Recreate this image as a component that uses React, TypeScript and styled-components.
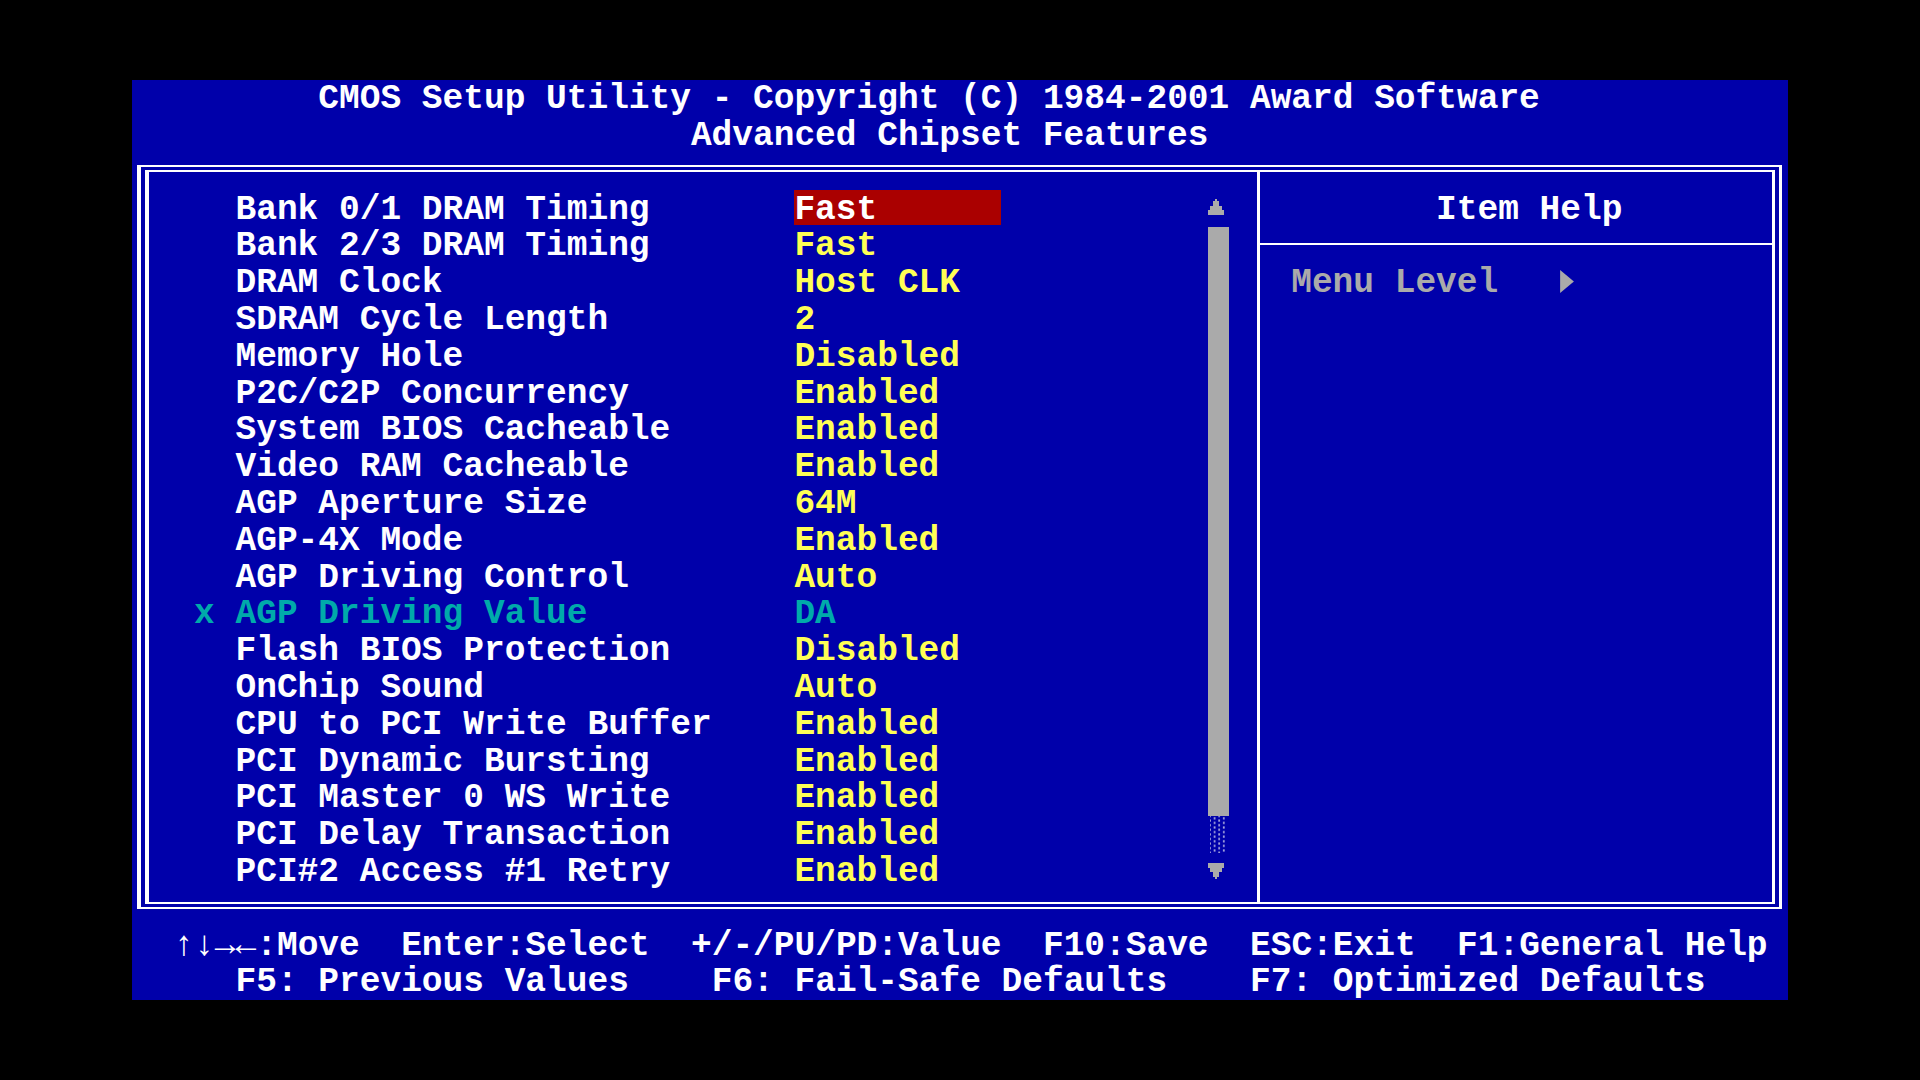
import React from "react";
import styled, { createGlobalStyle, css } from "styled-components";

const CW = 20.7; // character cell width
const RH = 36.8; // character cell height
const TEXT_SHIFT = 2.2; // baseline offset inside a cell
const px = (n: number) => `${+n.toFixed(3)}px`;

const C = {
  blue: "#0000AA",
  white: "#FFFFFF",
  yellow: "#FFFF55",
  cyan: "#00AAAA",
  gray: "#AAAAAA",
  red: "#AA0000",
};

// measured frame geometry (screen-relative)
const FRAME_LEFT_INNER = 17.3;
const DIVIDER_X = 1125;
const DIVIDER_W = 3.5;

const GlobalStyle = createGlobalStyle`
  html, body { margin: 0; padding: 0; background: #000; }
  body { width: 1920px; height: 1080px; overflow: hidden; }
`;

const cellText = css`
  box-sizing: border-box;
  height: ${px(RH)};
  line-height: ${px(RH - TEXT_SHIFT)};
  padding-top: ${px(TEXT_SHIFT)};
`;

const Screen = styled.div`
  width: ${px(80 * CW)};
  height: ${px(25 * RH)};
  margin: 80px auto 0;
  background: ${C.blue};
  display: flex;
  flex-direction: column;
  font-family: "Liberation Mono", "DejaVu Sans Mono", monospace;
  font-weight: 700;
  font-size: 34.5px;
  color: ${C.white};
  white-space: pre;
`;

const Header = styled.header`
  display: flex;
  flex-direction: column;
`;

const TitleLine = styled.div<{ $indent: number }>`
  ${cellText};
  padding-left: ${(p) => px(p.$indent * CW)};
`;

const Frame = styled.main`
  box-sizing: border-box;
  height: ${px(21 * RH - 11.4 - 17.4)};
  margin: 11.4px 6.3px 17.4px 5.3px;
  border-style: double;
  border-color: ${C.white};
  border-width: 7px 10px 7px 12px;
  display: flex;
`;

const ListPanel = styled.section`
  width: ${px(DIVIDER_X - FRAME_LEFT_INNER)};
  flex: none;
  padding-top: ${px(RH / 2)};
  display: flex;
  align-items: flex-start;
`;

const ItemList = styled.div`
  width: ${px(52 * CW - FRAME_LEFT_INNER)};
  display: flex;
  flex-direction: column;
`;

const ItemRow = styled.div<{ $disabled?: boolean }>`
  ${cellText};
  display: flex;
  align-items: flex-start;
  padding-left: ${px(3 * CW - FRAME_LEFT_INNER)};
  color: ${(p) => (p.$disabled ? C.cyan : C.white)};
`;

const Mark = styled.span`
  width: ${px(2 * CW)};
  flex: none;
`;

const Label = styled.span`
  width: ${px(27 * CW)};
  flex: none;
`;

const Value = styled.span<{ $selected?: boolean; $disabled?: boolean }>`
  box-sizing: border-box;
  width: ${px(10 * CW)};
  flex: none;
  margin-top: ${px(-TEXT_SHIFT - 0.6)};
  padding-top: ${px(TEXT_SHIFT + 0.6)};
  height: 35.6px;
  color: ${(p) => (p.$selected ? C.white : p.$disabled ? C.cyan : C.yellow)};
  background: ${(p) => (p.$selected ? C.red : "transparent")};
`;

const Scrollbar = styled.div`
  width: ${px(CW)};
  flex: none;
  display: flex;
  flex-direction: column;
`;

const ScrollArrow = styled.div<{ $top: number }>`
  height: ${px(RH)};
  box-sizing: border-box;
  padding-top: ${(p) => px(p.$top)};
  display: flex;
  align-items: flex-start;
  svg {
    display: block;
  }
`;

const Thumb = styled.div`
  height: ${px(16 * RH)};
  background: ${C.gray};
`;

const ShadeTrack = styled.div`
  height: ${px(RH)};
  margin: 0 2px;
  background-image: radial-gradient(circle, #a4a4dc 0.9px, transparent 1.3px),
    radial-gradient(circle, #a4a4dc 0.9px, transparent 1.3px);
  background-size: 9.2px 4.6px, 9.2px 4.6px;
  background-position: 0 0, 4.6px 2.3px;
`;

const Divider = styled.div`
  width: ${px(DIVIDER_W)};
  flex: none;
  background: ${C.white};
`;

const HelpPanel = styled.aside`
  flex: 1;
  display: flex;
  flex-direction: column;
`;

const HelpTitle = styled.div`
  ${cellText};
  margin-top: ${px(RH / 2)};
  padding-left: ${px(63 * CW - (DIVIDER_X + DIVIDER_W))};
`;

const HelpRule = styled.div`
  height: 2.4px;
  margin-top: 15.5px;
  background: ${C.white};
`;

const MenuLevel = styled.div`
  ${cellText};
  margin-top: 19px;
  padding-left: ${px(56 * CW - (DIVIDER_X + DIVIDER_W))};
  color: ${C.gray};
  display: flex;
  align-items: flex-start;
`;

const GlyphCell = styled.span`
  width: ${px(CW)};
  flex: none;
  padding-top: 3.5px;
  svg {
    display: block;
  }
`;

const Footer = styled.footer`
  display: flex;
  flex-direction: column;
`;

const FooterLine = styled.div`
  ${cellText};
`;

const UpArrow = () => (
  <svg width="16.1" height="16.1" viewBox="0 0 7 7" shapeRendering="crispEdges">
    <path d="M3 0H4V1H5V3H6V5H7V7H0V5H1V3H2V1H3Z" fill={C.gray} />
  </svg>
);

const DownArrow = () => (
  <svg width="16.1" height="16.1" viewBox="0 0 7 7" shapeRendering="crispEdges">
    <path d="M0 0H7V2H6V4H5V6H4V7H3V6H2V4H1V2H0Z" fill={C.gray} />
  </svg>
);

const RightArrow = () => (
  <svg width="14" height="23" viewBox="0 0 6 10">
    <path d="M0 0L6 5L0 10Z" fill={C.gray} />
  </svg>
);

type Item = { label: string; value: string; selected?: boolean; disabled?: boolean };

const items: Item[] = [
  { label: "Bank 0/1 DRAM Timing", value: "Fast", selected: true },
  { label: "Bank 2/3 DRAM Timing", value: "Fast" },
  { label: "DRAM Clock", value: "Host CLK" },
  { label: "SDRAM Cycle Length", value: "2" },
  { label: "Memory Hole", value: "Disabled" },
  { label: "P2C/C2P Concurrency", value: "Enabled" },
  { label: "System BIOS Cacheable", value: "Enabled" },
  { label: "Video RAM Cacheable", value: "Enabled" },
  { label: "AGP Aperture Size", value: "64M" },
  { label: "AGP-4X Mode", value: "Enabled" },
  { label: "AGP Driving Control", value: "Auto" },
  { label: "AGP Driving Value", value: "DA", disabled: true },
  { label: "Flash BIOS Protection", value: "Disabled" },
  { label: "OnChip Sound", value: "Auto" },
  { label: "CPU to PCI Write Buffer", value: "Enabled" },
  { label: "PCI Dynamic Bursting", value: "Enabled" },
  { label: "PCI Master 0 WS Write", value: "Enabled" },
  { label: "PCI Delay Transaction", value: "Enabled" },
  { label: "PCI#2 Access #1 Retry", value: "Enabled" },
];

export default function App() {
  return (
    <>
      <GlobalStyle />
      <Screen>
        <Header>
          <TitleLine $indent={9}>CMOS Setup Utility - Copyright (C) 1984-2001 Award Software</TitleLine>
          <TitleLine $indent={27}>Advanced Chipset Features</TitleLine>
        </Header>
        <Frame>
          <ListPanel>
            <ItemList>
              {items.map((it) => (
                <ItemRow key={it.label} $disabled={it.disabled}>
                  <Mark>{it.disabled ? "x" : ""}</Mark>
                  <Label>{it.label}</Label>
                  <Value $selected={it.selected} $disabled={it.disabled}>
                    {it.value}
                  </Value>
                </ItemRow>
              ))}
            </ItemList>
            <Scrollbar>
              <ScrollArrow $top={8.6}>
                <UpArrow />
              </ScrollArrow>
              <Thumb />
              <ShadeTrack />
              <ScrollArrow $top={10}>
                <DownArrow />
              </ScrollArrow>
            </Scrollbar>
          </ListPanel>
          <Divider />
          <HelpPanel>
            <HelpTitle>Item Help</HelpTitle>
            <HelpRule />
            <MenuLevel>
              {"Menu Level   "}
              <GlyphCell>
                <RightArrow />
              </GlyphCell>
            </MenuLevel>
          </HelpPanel>
        </Frame>
        <Footer>
          <FooterLine>{"  ↑↓→←:Move  Enter:Select  +/-/PU/PD:Value  F10:Save  ESC:Exit  F1:General Help"}</FooterLine>
          <FooterLine>{"     F5: Previous Values    F6: Fail-Safe Defaults    F7: Optimized Defaults"}</FooterLine>
        </Footer>
      </Screen>
    </>
  );
}
